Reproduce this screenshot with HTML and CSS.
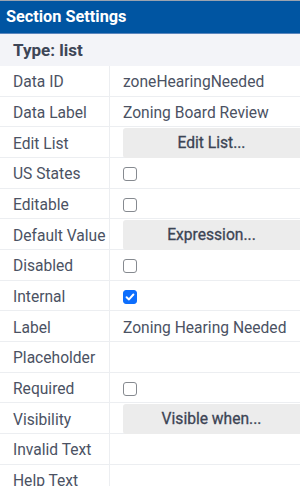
FILE: index.html
```html
<!DOCTYPE html>
<html lang="en">
<head>
    <meta charset="UTF-8">
    <meta name="viewport" content="width=device-width, initial-scale=1.0">
    <title>Section Settings</title>
    <link rel="stylesheet" href="styles.css">
</head>
<body>
    <div class="panel">
        <div class="panel-title">Section Settings</div>
        <div class="type-row">Type: list</div>
        <div class="props">
            <div class="row"><div class="key">Data ID</div><div class="val">zoneHearingNeeded</div></div>
            <div class="row"><div class="key">Data Label</div><div class="val">Zoning Board Review</div></div>
            <div class="row"><div class="key">Edit List</div><div class="val"><button class="btn">Edit List...</button></div></div>
            <div class="row"><div class="key">US States</div><div class="val"><span class="check"></span></div></div>
            <div class="row"><div class="key">Editable</div><div class="val"><span class="check"></span></div></div>
            <div class="row"><div class="key">Default Value</div><div class="val"><button class="btn">Expression...</button></div></div>
            <div class="row"><div class="key">Disabled</div><div class="val"><span class="check"></span></div></div>
            <div class="row"><div class="key">Internal</div><div class="val">
                <span class="check checked">
                    <svg width="10" height="10" viewBox="0 0 10 10"><path d="M1.6 5.2 L4 7.4 L8.4 2.5" fill="none" stroke="#fff" stroke-width="2" stroke-linecap="round" stroke-linejoin="round"/></svg>
                </span>
            </div></div>
            <div class="row"><div class="key">Label</div><div class="val">Zoning Hearing Needed</div></div>
            <div class="row"><div class="key">Placeholder</div><div class="val"></div></div>
            <div class="row"><div class="key">Required</div><div class="val"><span class="check"></span></div></div>
            <div class="row"><div class="key">Visibility</div><div class="val"><button class="btn">Visible when...</button></div></div>
            <div class="row"><div class="key">Invalid Text</div><div class="val"></div></div>
            <div class="row"><div class="key">Help Text</div><div class="val"></div></div>
        </div>
    </div>
</body>
</html>
```

FILE: styles.css
```css
body {
    margin: 0;
    background-color: #fff;
    font-family: Roboto, "Liberation Sans", Arial, sans-serif;
    overflow: hidden;
}

.panel {
    width: 300px;
    border-top: 1px solid #9aa3b0;
}

.panel-title {
    height: 32px;
    line-height: 32px;
    padding-left: 6px;
    background-color: #0055a2;
    color: #fff;
    font-size: 16.3px;
    font-weight: 700;
    border-bottom: 1px solid #5b86bd;
}

.type-row {
    height: 32px;
    line-height: 33px;
    padding-left: 13px;
    background-color: #f3f4f8;
    color: #3e4656;
    font-size: 17px;
    font-weight: 700;
}

.props {
    display: flex;
    flex-direction: column;
}

.row {
    display: flex;
    height: 29.67px;
    border-bottom: 1px solid #eceef1;
    color: #4b5263;
    font-size: 15.6px;
}

.key {
    width: 96px;
    padding-left: 13px;
    padding-top: 3px;
    border-right: 1px solid #eceef1;
    display: flex;
    align-items: center;
    white-space: nowrap;
}

.val {
    flex: 1;
    padding-left: 13px;
    display: flex;
    align-items: center;
    white-space: nowrap;
}

.val:not(:has(.btn)) {
    padding-top: 3px;
}

.btn {
    width: 100%;
    height: 30px;
    margin-top: 1px;
    border: none;
    border-radius: 3px 0 0 3px;
    background-color: #ececec;
    color: #3c4454;
    font-family: inherit;
    font-size: 15.6px;
    font-weight: 400;
    -webkit-text-stroke: 0.3px #3c4454;
    cursor: pointer;
}

.check {
    box-sizing: border-box;
    width: 14px;
    height: 14px;
    border: 1.5px solid #868a90;
    border-radius: 3px;
    display: flex;
    align-items: center;
    justify-content: center;
}

.check.checked {
    background-color: #0d6efd;
    border-color: #0d6efd;
}
```
